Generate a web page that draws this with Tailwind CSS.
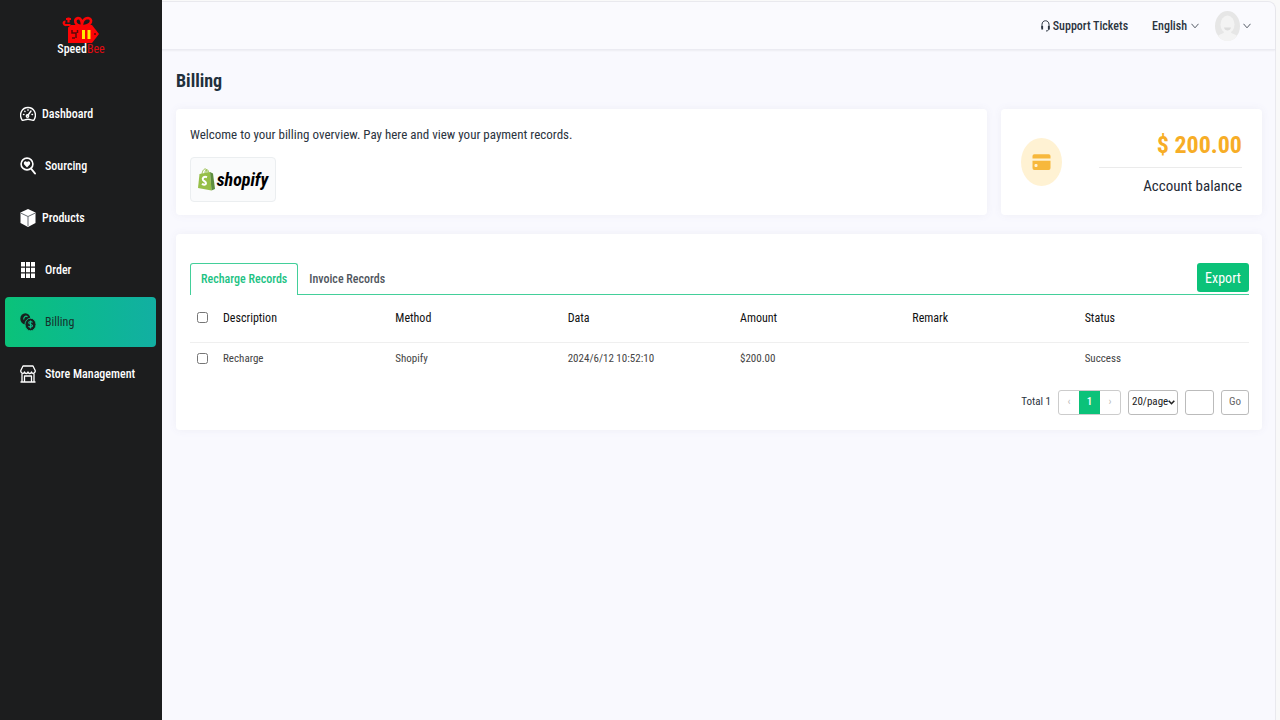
<!DOCTYPE html>
<html lang="en">
<head>
<meta charset="utf-8">
<meta name="viewport" content="width=device-width, initial-scale=1">
<title>SpeedBee - Billing</title>
<script src="https://cdn.jsdelivr.net/npm/@tailwindcss/browser@4"></script>
</head>
<body class="flex min-h-screen bg-[#f9f9f9] font-['Roboto_Condensed','Roboto',sans-serif] text-xs text-[#2b3440]">
<aside class="flex w-[162px] shrink-0 flex-col bg-[#1c1d1e] text-white">
  <a href="#" class="flex h-[88px] flex-col items-center pt-4 leading-3" aria-label="SpeedBee home">
    <svg class="h-[27px] w-10" viewBox="0 0 40 27" fill="none">
      <path d="M7 11.500 10 9h21l7 9-7 9H7z" fill="#fb0405"/>
      <path d="M20 10C13 9 13 3 17 2c3 0 4 4 4 8 0-4 2-8 6-8 5 1 4 7-4 8" stroke="#fb0405" stroke-width="2.600"/>
      <path d="M7.500 1.500v5M4.500 5.500c-3 0-2 4 1 3.500h4M5 3h5" stroke="#fb0405" stroke-width="2.200"/>
      <path d="M11 14v3h4v5M16.500 14v3M11 22h3" stroke="#5b0808" stroke-width="1.500"/>
      <path d="M22.500 14v9M28 14v9" stroke="#ffe900" stroke-width="3"/>
      <circle cx="34" cy="18" r="1" fill="#5b0808"/>
    </svg>
    <span class="text-xs leading-3 font-medium">Speed<span class="font-normal text-[#e00b10]">Bee</span></span>
  </a>
  <nav class="flex flex-col gap-0.5 pt-px pr-1.5 pl-[5px] font-medium">
    <a href="#" class="flex h-[50px] items-center gap-1.5 pl-[15px]">
      <svg class="size-4" viewBox="0 0 16 16" fill="none" stroke="#fff" stroke-width="1.400" stroke-linecap="round" stroke-linejoin="round"><path d="M2 14C-1.500 8 2 1.500 8 1.500S17.500 8 14 14c-2 .8-3-.8-6-.8S4 14.800 2 14z"/><path d="M7.800 9.500 11 5M8 3.800v.4M4.800 5.200l.2.2M3.500 8.500H4M12 8.500h.5"/><circle cx="7.500" cy="10" r="1.200"/></svg>
      Dashboard</a>
    <a href="#" class="flex h-[50px] items-center gap-[9px] pl-[15px]">
      <svg class="h-[18px] w-4" viewBox="0 0 16 18" fill="none"><circle cx="7" cy="7" r="5.900" stroke="#fff" stroke-width="1.600"/><path d="m11 11.500 4 5" stroke="#fff" stroke-width="2" stroke-linecap="round"/><path d="M7 10.500 4 7.200C3 4.500 6 3.500 7 5.200 8 3.500 11 4.500 10 7.200z" fill="#fff"/></svg>
      Sourcing</a>
    <a href="#" class="flex h-[50px] items-center gap-1.5 pl-[15px]">
      <svg class="h-[18px] w-4" viewBox="0 0 16 18"><path d="m8 0 7.500 3.500v10.500L8 18 .5 14V3.500z" fill="#fff"/><path d="M1 4.200 8 7.500l7-3.300M8 7.500V17" fill="none" stroke="#666b70"/></svg>
      Products</a>
    <a href="#" class="flex h-[50px] items-center gap-[9px] pl-[15px]">
      <svg class="size-4" viewBox="0 0 16 16" fill="#fff"><path d="M1 0h4v4.500H1zM6 0h4v4.500H6zM11 0h4v4.500h-4zM1 5.700h4v4.500H1zM6 5.700h4v4.500H6zM11 5.700h4v4.500h-4zM1 11.400h4V16H1zM6 11.400h4V16H6zM11 11.400h4V16h-4z"/></svg>
      Order</a>
    <a href="#" aria-current="page" class="flex h-[50px] items-center gap-[9px] rounded bg-linear-to-r from-[#0bc279] to-[#12afa2] pl-[15px] font-normal text-[#17302b]">
      <svg class="h-[18px] w-4" viewBox="0 0 16 18"><ellipse cx="5.300" cy="5.800" rx="5" ry="5.600" fill="#18201f"/><path d="M7.500 3.800C5.500 2.300 3.500 4 3.700 6.500" fill="none" stroke="#0bc07d" stroke-width="1.200"/><ellipse cx="10.500" cy="11.500" rx="5.500" ry="6.300" fill="#18201f" stroke="#0cbe82" stroke-width=".9"/><path d="M12.500 9.500c-1-1.500-4-1.200-3.700.5.300 1.500 3.700 1 3.700 2.800 0 1.600-3 1.700-4 .3M10.600 7.500v8" fill="none" stroke="#0dbb8a" stroke-width="1.100"/></svg>
      Billing</a>
    <a href="#" class="flex h-[50px] items-center gap-[9px] pl-[15px]">
      <svg class="h-[18px] w-4" viewBox="0 0 16 18" fill="none" stroke="#fff" stroke-width="1.300" stroke-linejoin="round"><path d="M3 1h10l2.200 4.500v1C14.500 9 12 8.800 11.500 7 11 9 8.500 9 8 7 7.500 9 5 9 4.500 7 4 8.800 1.500 9 .8 6.500v-1zM2 9v7.500M14 9v7.500M.5 17h15M4.500 16.500V11h7v5.500"/></svg>
      Store Management</a>
  </nav>
</aside>

<div class="mt-px mr-1 flex min-w-0 flex-1 flex-col rounded-tr-lg border-t border-r border-[#e9e9ee] bg-[#f9f9fe]">
  <header class="flex h-12 items-center justify-end rounded-tr-lg border-b border-[#ebebf2] bg-[#fafafe] pr-6 font-medium shadow-xs">
    <a href="#" class="mr-6 flex items-center gap-[3px]">
      <svg class="h-3 w-[9px]" viewBox="0 0 9 12" fill="none" stroke="#2b3440"><path d="M1 8V4.500C1 -.5 8 -.5 8 4.500V8c0 2-1 3-3 3"/><path d="M1.200 6v3.500M7.800 6v3.500" stroke-width="1.800"/></svg>
      Support Tickets</a>
    <button type="button" class="mr-4 flex items-center gap-1">English
      <svg class="h-1.5 w-2" viewBox="0 0 8 6" fill="none" stroke="#555c66"><path d="m.5.8 3.500 4 3.500-4"/></svg>
    </button>
    <button type="button" class="flex items-center gap-[3px]" aria-label="Account menu">
      <svg class="h-[30px] w-[25px]" viewBox="0 0 25 30"><ellipse cx="12.500" cy="15" rx="12.500" ry="15" fill="#e6e6e6"/><path d="M3 25c3-3 6-2 6-4h7c0 2 3 1 6 4-5 7-14 7-19 0z" fill="#f3f3f3"/><ellipse cx="12.500" cy="13.500" rx="7" ry="9" fill="#f3f3f3"/><path d="M9 16.500h7c-.5 4-6.500 4-7 0z" fill="#dcdcdc"/></svg>
      <svg class="h-1.5 w-2" viewBox="0 0 8 6" fill="none" stroke="#555c66"><path d="m.5.8 3.500 4 3.500-4"/></svg>
    </button>
  </header>

  <main class="flex flex-col pr-[13px] pl-3.5">
    <h1 class="mt-[19px] text-lg leading-6 font-bold text-[#22303c]">Billing</h1>
    <div class="mt-4 flex gap-3.5">
      <section class="h-[106px] flex-1 rounded bg-white px-3.5 pt-[17px] shadow-[0_0_8px_#eeeef7]">
        <p class="text-[13px] leading-[18px]">Welcome to your billing overview. Pay here and view your payment records.</p>
        <button type="button" class="mt-[13px] flex h-[45px] w-[86px] items-center justify-center gap-0.5 rounded border border-[#ebeef0] bg-[#fafbfc]" aria-label="Pay with Shopify">
          <svg class="h-[23px] w-[17px]" viewBox="0 0 17 23"><path d="m1.500 6 10.500-2 1.500 18.500L0 20z" fill="#96bf48"/><path d="m12 4 3 1.500L17 21l-3.500 1.500z" fill="#5e8e3e"/><path d="M4 7C4 3 6 .7 7.500 1 9 1.500 9 4 9 6M7 5c0-3 2-4.500 3-2.500l.5 2" fill="none" stroke="#96bf48" stroke-width="1"/><path d="M9 9.200C6 8 4 10 5 12c1 1.500 3 1.800 3 3.300 0 2-2.500 1.700-4 .4" fill="none" stroke="#fff" stroke-width="2"/></svg>
          <span class="text-lg leading-5 font-bold text-black italic">shopify</span>
        </button>
      </section>
      <section class="flex h-[106px] w-[261px] items-center justify-between rounded bg-white px-5 shadow-[0_0_8px_#eeeef7]">
        <svg class="h-12 w-[41px]" viewBox="0 0 41 48"><ellipse cx="20.500" cy="24" rx="20.500" ry="24" fill="#fff2d3"/><path d="M11.500 20.500V18q0-1.800 1.800-1.800h14.400q1.800 0 1.800 1.800v2.500zM11.500 22.700h18V30q0 2-1.800 2H13.300q-1.800 0-1.800-2z" fill="#f7b83c"/><rect x="13.500" y="26" width="3" height="3" rx="1" fill="#fff2d3"/></svg>
        <div class="w-[143px] pt-0.5 text-right">
          <p class="border-b border-[#ebebeb] pb-2 text-2xl leading-7 font-bold text-[#f7ad26]">$ 200.00</p>
          <p class="pt-2 text-[15px] leading-5 text-[#1f2a35]">Account balance</p>
        </div>
      </section>
    </div>

    <section class="mt-[19px] rounded bg-white pt-[29px] pr-[13px] pb-[15px] pl-3.5 shadow-[0_0_8px_#eeeef7]">
      <div class="flex h-8 items-start justify-between border-b border-[#43cf9a]">
        <div class="flex" role="tablist">
          <button type="button" role="tab" aria-selected="true" class="h-8 rounded-t-[3px] border border-b-0 border-[#43cf9a] bg-white px-2.5 pb-0.5 font-medium text-[#21c283]">Recharge Records</button>
          <button type="button" role="tab" aria-selected="false" class="h-8 px-[11px] font-medium text-[#50565e]">Invoice Records</button>
        </div>
        <button type="button" class="h-[29px] w-[52px] rounded-[3px] bg-[#0bc279] text-sm text-white">Export</button>
      </div>
      <table class="w-full table-fixed text-left text-[11px]">
        <thead class="text-xs text-[#111]">
          <tr class="h-[47px] border-b border-[#efefef]">
            <th class="w-[25px] pl-[7px]"><input type="checkbox" aria-label="Select all" class="mb-0.5 block size-[11px]"></th>
            <th class="px-2 font-normal">Description</th>
            <th class="px-2 font-normal">Method</th>
            <th class="px-2 font-normal">Data</th>
            <th class="px-2 font-normal">Amount</th>
            <th class="px-2 font-normal">Remark</th>
            <th class="px-2 font-normal">Status</th>
          </tr>
        </thead>
        <tbody class="text-[#444]">
          <tr class="h-[34px]">
            <td class="pl-[7px]"><input type="checkbox" aria-label="Select recharge" class="mb-0.5 block size-[11px]"></td>
            <td class="px-2">Recharge</td>
            <td class="px-2">Shopify</td>
            <td class="px-2">2024/6/12 10:52:10</td>
            <td class="px-2">$200.00</td>
            <td class="px-2"></td>
            <td class="px-2">Success</td>
          </tr>
        </tbody>
      </table>
      <div class="mt-3.5 flex h-[25px] items-stretch justify-end gap-[7px] text-[11px]">
        <span class="self-center">Total 1</span>
        <div class="flex w-[63px] overflow-hidden rounded-[3px] border border-[#ccc]">
          <button type="button" disabled class="flex-1 text-[#bbb]" aria-label="Previous page">‹</button>
          <button type="button" class="-my-px w-[21px] bg-[#0bc279] font-medium text-white" aria-current="page">1</button>
          <button type="button" disabled class="flex-1 text-[#bbb]" aria-label="Next page">›</button>
        </div>
        <div class="relative w-[50px]">
          <select aria-label="Rows per page" class="h-full w-full appearance-none rounded-[3px] border border-[#bbb] bg-white pl-[3px] text-[#222]"><option>20/page</option></select>
          <svg class="pointer-events-none absolute top-2.5 right-[3px] h-[5px] w-[7px]" viewBox="0 0 7 5" fill="none" stroke="#222" stroke-width="1.600"><path d="m.7.800 2.800 2.900L6.300.8"/></svg>
        </div>
        <input type="text" aria-label="Page number" class="w-[29px] rounded-[3px] border border-[#bbb]">
        <button type="button" class="w-7 rounded-[3px] border border-[#bbb] text-[#666]">Go</button>
      </div>
    </section>
  </main>
</div>
</body>
</html>
